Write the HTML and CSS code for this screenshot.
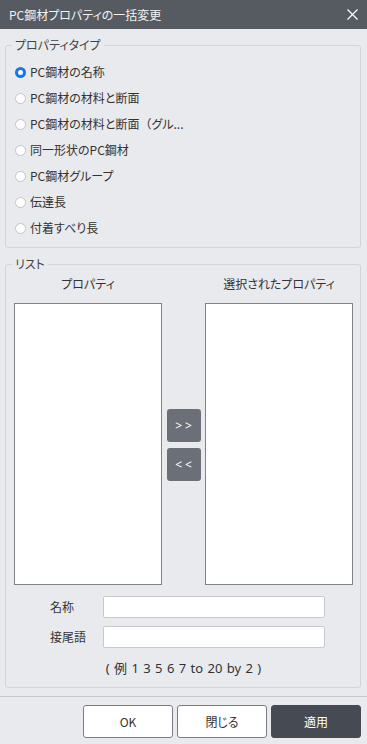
FILE: index.html
```html
<!DOCTYPE html>
<html lang="ja">
<head>
  <meta charset="UTF-8" />
  <meta name="viewport" content="width=device-width, initial-scale=1.0"/>
  <title>PC鋼材プロパティの一括変更</title>
  <link rel="stylesheet" href="styles.css">
</head>
<body>
  <div class="dialog">
    <div class="title-bar">
      <span class="title">PC鋼材プロパティの一括変更</span>
      <button class="close-btn" aria-label="閉じる">
        <svg width="11" height="11" viewBox="0 0 11 11">
          <path d="M0.5 0.5 L10.5 10.5 M10.5 0.5 L0.5 10.5" stroke="#ffffff" stroke-width="1.2" fill="none"/>
        </svg>
      </button>
    </div>

    <div class="content">
      <fieldset class="group">
        <legend>プロパティタイプ</legend>
        <div class="radio-list">
          <label class="radio-row"><span class="radio checked"></span>PC鋼材の名称</label>
          <label class="radio-row"><span class="radio"></span>PC鋼材の材料と断面</label>
          <label class="radio-row"><span class="radio"></span>PC鋼材の材料と断面<span class="full">（</span>グル...</label>
          <label class="radio-row"><span class="radio"></span>同一形状のPC鋼材</label>
          <label class="radio-row"><span class="radio"></span>PC鋼材グループ</label>
          <label class="radio-row"><span class="radio"></span>伝達長</label>
          <label class="radio-row"><span class="radio"></span>付着すべり長</label>
        </div>
      </fieldset>

      <fieldset class="group list-group">
        <legend>リスト</legend>
        <div class="columns">
          <div class="column">
            <div class="col-head">プロパティ</div>
            <div class="list-box"></div>
          </div>
          <div class="move-buttons">
            <button class="move-btn">&gt;&gt;</button>
            <button class="move-btn">&lt;&lt;</button>
          </div>
          <div class="column">
            <div class="col-head">選択されたプロパティ</div>
            <div class="list-box"></div>
          </div>
        </div>
        <div class="field-row">
          <label class="field-label" for="name">名称</label>
          <input type="text" id="name">
        </div>
        <div class="field-row">
          <label class="field-label" for="suffix">接尾語</label>
          <input type="text" id="suffix">
        </div>
        <div class="hint">( 例 1 3 5 6 7 to 20 by 2 )</div>
      </fieldset>
    </div>

    <div class="footer">
      <button class="btn">OK</button>
      <button class="btn">閉じる</button>
      <button class="btn primary">適用</button>
    </div>
  </div>
</body>
</html>
```

FILE: styles.css
```css
* {
  box-sizing: border-box;
}
body {
  margin: 0;
  font-family: "Noto Sans CJK JP", "Noto Sans", sans-serif;
  font-size: 12px;
  font-feature-settings: "palt";
  color: #333333;
  background-color: #e9eaee;
}
.dialog {
  width: 367px;
  height: 744px;
  background-color: #e9eaee;
}
.title-bar {
  height: 29px;
  background-color: #565b62;
  display: flex;
  align-items: center;
  justify-content: space-between;
  padding: 0 8px 0 9px;
}
.title {
  color: #f2f2f2;
  font-size: 12px;
  line-height: 16px;
}
.close-btn {
  background: none;
  border: none;
  padding: 0;
  width: 13px;
  height: 13px;
  display: flex;
  align-items: center;
  justify-content: center;
}
.content {
  padding: 8px 6px 0 5px;
}
.group {
  margin: 0;
  padding: 0 7px 0 8px;
  border: 1px solid #d3d4d8;
  border-radius: 3px;
  min-width: 0;
}
.group legend {
  margin-left: -2px;
  padding: 0 3px;
  line-height: 16px;
  color: #444444;
}
.radio-list {
  padding: 6px 0 6px;
}
.radio-row {
  display: flex;
  align-items: center;
  height: 26px;
  line-height: 16px;
}
.radio-row .full {
  font-feature-settings: normal;
}
.radio {
  width: 11px;
  height: 11px;
  margin: 0 4px 0 1px;
  border: 1px solid #c3c4c8;
  border-radius: 50%;
  background-color: #ffffff;
}
.radio.checked {
  border: 3px solid #1a73e8;
}
.list-group {
  margin-top: 8px;
  padding-bottom: 11px;
}
.columns {
  display: flex;
  justify-content: space-between;
  padding-top: 4px;
}
.column {
  width: 148px;
  display: flex;
  flex-direction: column;
}
.col-head {
  text-align: center;
  line-height: 16px;
  margin-bottom: 11px;
}
.list-box {
  height: 282px;
  background-color: #ffffff;
  border: 1px solid #7f8288;
}
.move-buttons {
  display: flex;
  flex-direction: column;
  justify-content: center;
  gap: 6px;
  padding-top: 29px;
}
.move-btn {
  width: 34px;
  height: 33px;
  border: none;
  border-radius: 3px;
  background-color: #6b7078;
  color: #ffffff;
  font-family: "Noto Sans", sans-serif;
  font-size: 12px;
  letter-spacing: 3px;
  padding: 0 0 0 3px;
}
.field-row {
  display: flex;
  align-items: center;
  margin-top: 11px;
}
.field-row + .field-row {
  margin-top: 8px;
}
.field-label {
  width: 89px;
  padding-left: 36px;
  line-height: 16px;
}
.field-row input {
  width: 222px;
  height: 22px;
  border: 1px solid #c8c9cd;
  border-radius: 2px;
  background-color: #ffffff;
  margin: 0;
  padding: 0 4px;
}
.hint {
  text-align: center;
  margin-top: 12px;
  line-height: 16px;
  font-family: "Noto Sans", "Noto Sans CJK JP", sans-serif;
  font-size: 13px;
  word-spacing: 1px;
}
.footer {
  margin-top: 8px;
  border-top: 1px solid #c8c9cd;
  display: flex;
  justify-content: flex-end;
  gap: 4px;
  padding: 8px 6px 0 0;
}
.btn {
  width: 90px;
  height: 33px;
  border: 1px solid #7b7e84;
  border-radius: 3px;
  background-color: #ffffff;
  color: #333333;
  font-family: "Noto Sans CJK JP", "Noto Sans", sans-serif;
  font-size: 12px;
  font-feature-settings: "palt";
}
.btn.primary {
  background-color: #464b53;
  border-color: #464b53;
  color: #ffffff;
}
```
